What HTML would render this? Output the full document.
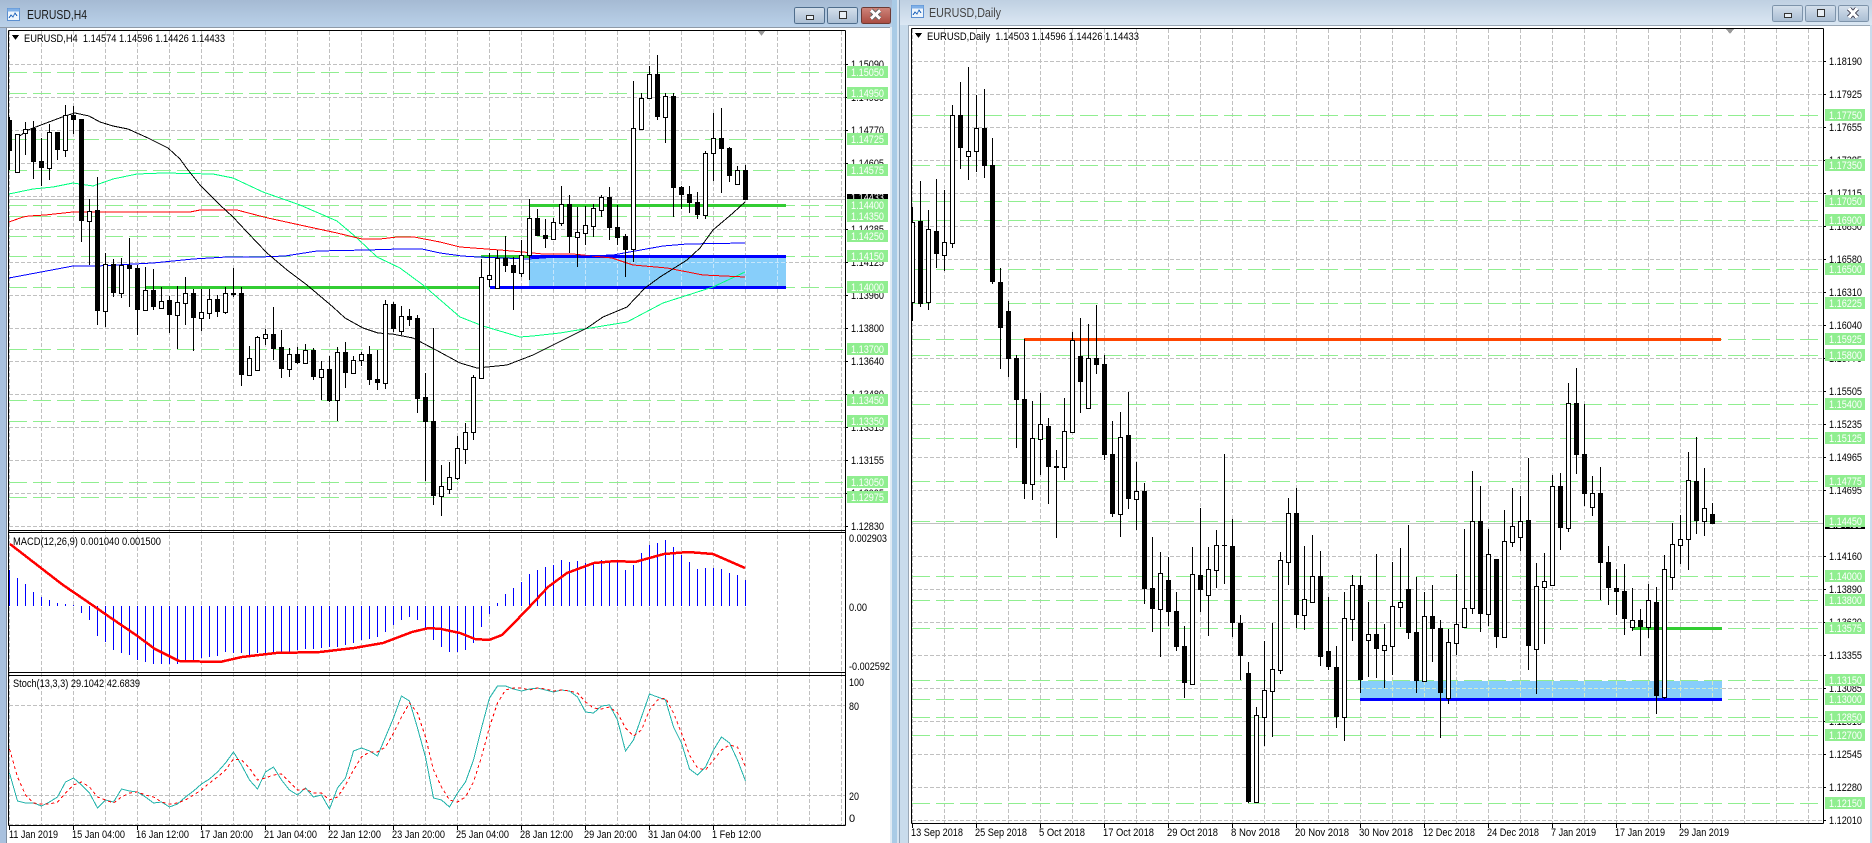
<!DOCTYPE html>
<html><head><meta charset="utf-8"><title>EURUSD</title>
<style>
html,body{margin:0;padding:0;background:#fff;width:1872px;height:843px;overflow:hidden}
svg{display:block;font-family:"Liberation Sans",sans-serif}
text{font-size:11px;fill:#000}
.g{fill:#fff}
.tt{font-size:13px;fill:#1a1a1a}
</style></head><body>
<svg width="1872" height="843" viewBox="0 0 1872 843" xmlns="http://www.w3.org/2000/svg" shape-rendering="crispEdges">
<defs>
<linearGradient id="tl" x1="0" y1="0" x2="0" y2="1"><stop offset="0" stop-color="#a5bad3"/><stop offset="1" stop-color="#bad1e9"/></linearGradient>
<linearGradient id="tr" x1="0" y1="0" x2="0" y2="1"><stop offset="0" stop-color="#bfd0e2"/><stop offset="1" stop-color="#dbe7f3"/></linearGradient>
<linearGradient id="bt" x1="0" y1="0" x2="0" y2="1"><stop offset="0" stop-color="#d5e0ec"/><stop offset="1" stop-color="#a9bdd3"/></linearGradient>
<linearGradient id="rd" x1="0" y1="0" x2="0" y2="1"><stop offset="0" stop-color="#cf857b"/><stop offset="1" stop-color="#a94a40"/></linearGradient>
<clipPath id="cl"><rect x="9" y="31" width="836" height="794"/></clipPath>
<clipPath id="cr"><rect x="912" y="29" width="911" height="794"/></clipPath>
</defs>
<rect width="1872" height="843" fill="#fff"/>
<!-- window chrome -->
<rect x="0" y="0" width="897" height="27" fill="url(#tl)"/>
<rect x="0" y="27" width="6" height="816" fill="#a9c1de"/>
<rect x="6" y="27" width="1" height="816" fill="#7f8ea0"/>
<rect x="0" y="27" width="890" height="1" fill="#8e9aa8"/>
<rect x="890" y="27" width="2" height="816" fill="#dfeaf4"/>
<rect x="892" y="0" width="5" height="843" fill="#a9cbe6"/>
<rect x="897" y="0" width="2" height="843" fill="#d5e4f2"/>
<rect x="899" y="0" width="1" height="843" fill="#8ea4ba"/>
<rect x="900" y="0" width="972" height="25" fill="url(#tr)"/>
<rect x="900" y="25" width="8" height="818" fill="#c9dcec"/>
<rect x="908" y="25" width="1" height="818" fill="#9aa8b6"/>
<rect x="908" y="25" width="964" height="1" fill="#9aa8b6"/>
<rect x="1870" y="25" width="2" height="818" fill="#c9dcec"/>
<!-- title icons -->
<rect x="7.5" y="8.5" width="12" height="12" fill="#eef5fc" stroke="#5b8fd0"/><rect x="7.5" y="8.5" width="12" height="3" fill="#7fb0e8"/><path d="M9 18l2-3 2 2 2-4 2 3" fill="none" stroke="#2f6fc0"/>
<rect x="911.5" y="5.5" width="12" height="12" fill="#eef5fc" stroke="#5b8fd0"/><rect x="911.5" y="5.5" width="12" height="3" fill="#7fb0e8"/><path d="M913 15l2-3 2 2 2-4 2 3" fill="none" stroke="#2f6fc0"/>
<text class="tt" x="27" y="19" textLength="60" lengthAdjust="spacingAndGlyphs">EURUSD,H4</text>
<text class="tt" x="929" y="17" textLength="72" lengthAdjust="spacingAndGlyphs" style="fill:#444">EURUSD,Daily</text>
<!-- buttons -->
<rect x="794.5" y="7.5" width="30" height="16" rx="2" fill="url(#bt)" stroke="#4f6d8c"/><rect x="806.5" y="15.5" width="7" height="4" fill="#e9eff5" stroke="#333"/>
<rect x="827.5" y="7.5" width="30" height="16" rx="2" fill="url(#bt)" stroke="#4f6d8c"/><rect x="839.5" y="11.5" width="7" height="7" fill="#e9eff5" stroke="#333"/>
<rect x="861.5" y="7.5" width="29" height="16" rx="2" fill="url(#rd)" stroke="#6d3a34"/><path d="M871 10.5l9 8M880 10.5l-9 8" stroke="#6b6b6b" stroke-width="5" fill="none"/><path d="M871 10.5l9 8M880 10.5l-9 8" stroke="#fff" stroke-width="3" fill="none"/>
<rect x="1772.5" y="5.5" width="30" height="16" rx="2" fill="url(#bt)" stroke="#7d93aa"/><rect x="1784.5" y="13.5" width="7" height="4" fill="#e9eff5" stroke="#333"/>
<rect x="1805.5" y="5.5" width="30" height="16" rx="2" fill="url(#bt)" stroke="#7d93aa"/><rect x="1817.5" y="9.5" width="7" height="7" fill="#e9eff5" stroke="#333"/>
<rect x="1838.5" y="5.5" width="30" height="16" rx="2" fill="url(#bt)" stroke="#7d93aa"/><path d="M1849 8.5l8 9M1857 8.5l-8 9" stroke="#556" stroke-width="5" fill="none"/><path d="M1849 8.5l8 9M1857 8.5l-8 9" stroke="#fff" stroke-width="3" fill="none"/>

<!-- LEFT CHART -->
<g fill="none">
<path stroke="#c0c0c0" stroke-dasharray="4 2" d="M9 64.5H845M9 97.5H845M9 130.5H845M9 163.5H845M9 196.5H845M9 229.5H845M9 262.5H845M9 295.5H845M9 328.5H845M9 361.5H845M9 394.5H845M9 427.5H845M9 460.5H845M9 493.5H845M9 526.5H845M9 705.5H845M9 795.5H845M9 824.5H845"/>
<path stroke="#c0c0c0" stroke-dasharray="4 2" d="M9.5 31V825M41.5 31V825M73.5 31V825M105.5 31V825M137.5 31V825M169.5 31V825M201.5 31V825M233.5 31V825M265.5 31V825M297.5 31V825M329.5 31V825M361.5 31V825M393.5 31V825M425.5 31V825M457.5 31V825M489.5 31V825M521.5 31V825M553.5 31V825M585.5 31V825M617.5 31V825M649.5 31V825M681.5 31V825M713.5 31V825M745.5 31V825M777.5 31V825M809.5 31V825M841.5 31V825"/>
<path stroke="#90ee90" stroke-dasharray="18 6" d="M9 72.5H845M9 93.5H845M9 139.5H845M9 170.5H845M9 205.5H845M9 216.5H845M9 236.5H845M9 256.5H845M9 287.5H845M9 349.5H845M9 400.5H845M9 421.5H845M9 482.5H845M9 497.5H845"/>
</g>
<rect x="529" y="256" width="257" height="31" fill="#87cefa"/>
<path fill="none" stroke="#c4e6fc" stroke-dasharray="4 2" d="M553.5 258V286M585.5 258V286M617.5 258V286M649.5 258V286M681.5 258V286M713.5 258V286M745.5 258V286M777.5 258V286M529 262.5H786"/>
<path fill="none" stroke="#32cd32" stroke-width="3" d="M145 287.5H481M529 205.5H786M481 256.5H529"/>
<path fill="none" stroke="#0000ff" stroke-width="3" d="M490 287.5H786M529 256.5H786"/>
<path stroke="#c0c0c0" d="M9 199.5H845"/>
<g fill="none" clip-path="url(#cl)">
<polyline stroke="#00ff7f" points="9,194 33,189 53,187 73,183 93,186 113,179 137,174 163,173 213,174 233,178 263,192 300,205 337,221 357,238 377,257 400,268 423,285 460,317 483,326 520,337 533,336 560,333 627,322 663,303 713,287 745,272"/>
<polyline stroke="#ff0000" points="9,222 23,217 29,216 45,215 73,212 117,212 158,212 190,212 200,210 237,210 260,216 268,218 300,225 337,233 362,239 380,239 397,237 414,237 440,242 460,247 500,250 523,252 543,254 573,254 612,258 633,265 667,268 703,275 745,277"/>
<polyline stroke="#0000ff" points="9,278 73,266 97,266 153,263 193,259 227,257 260,257 285,256 317,251 367,250 400,249 422,249 440,253 462,256 478,257 528,259 557,257 613,255 663,246 687,244 745,243"/>
<polyline stroke="#000" points="17,138 28,130 41,125 65,116 75,113 89,116 100,122 113,126 128,129 148,138 168,148 180,159 188,170 200,185 220,205 233,217 247,232 267,253 287,270 307,285 333,307 345,318 363,328 378,333 392,334 413,338 436,350 460,363 477,368 507,365 533,355 563,340 587,328 603,317 627,307 645,288 660,277 687,260 700,248 713,230 733,213 745,202"/>
<path stroke="#000" d="M9.5 117V170M17.5 134V172M25.5 122V155M33.5 121V179M41.5 138V186M49.5 124V180M57.5 132V160M65.5 105V157M73.5 106V134M81.5 119V242M89.5 199V265M97.5 177V325M105.5 253V327M113.5 259V297M121.5 258V298M129.5 238V307M137.5 265V335M145.5 267V310M153.5 269V310M161.5 287V309M169.5 296V333M177.5 286V349M185.5 277V325M193.5 289V351M201.5 289V331M209.5 289V319M217.5 295V317M225.5 287V314M233.5 268V297M241.5 287V386M249.5 346V376M257.5 336V370M265.5 329V345M273.5 307V360M281.5 330V378M289.5 348V377M297.5 347V364M305.5 344V363M313.5 348V380M321.5 361V400M329.5 356V402M337.5 347V421M345.5 342V388M353.5 356V373M361.5 352V366M369.5 346V385M377.5 350V390M385.5 300V389M393.5 302V332M401.5 306V335M409.5 309V326M417.5 315V413M425.5 373V481M433.5 328V505M441.5 465V516M449.5 462V494M457.5 436V480M465.5 423V464M473.5 375V440M481.5 259V378M489.5 253V287M497.5 250V288M505.5 236V272M513.5 257V310M521.5 240V277M529.5 199V280M537.5 209V236M545.5 219V248M553.5 218V239M561.5 186V226M569.5 195V253M577.5 207V267M585.5 206V245M593.5 204V237M601.5 195V217M609.5 187V240M617.5 205V245M625.5 234V277M633.5 81V262M641.5 93V130M649.5 66V98M657.5 55V120M665.5 93V143M673.5 93V217M681.5 186V209M689.5 186V213M697.5 192V219M705.5 151V219M713.5 113V181M721.5 108V193M729.5 147V182M737.5 166V184M745.5 165V200"/>
<path fill="#000" stroke="none" d="M7 120h5v31h-5zM31 128h5v34h-5zM39 161h5v7h-5zM55 132h5v18h-5zM71 115h5v5h-5zM79 119h5v102h-5zM95 210h5v101h-5zM111 264h5v29h-5zM127 265h5v4h-5zM135 268h5v42h-5zM151 290h5v17h-5zM167 300h5v15h-5zM191 293h5v25h-5zM215 299h5v13h-5zM231 293h5v2h-5zM239 293h5v82h-5zM271 334h5v15h-5zM279 347h5v22h-5zM295 354h5v9h-5zM311 350h5v27h-5zM327 369h5v32h-5zM343 352h5v21h-5zM367 354h5v26h-5zM375 379h5v4h-5zM391 304h5v25h-5zM407 316h5v4h-5zM415 318h5v81h-5zM423 397h5v25h-5zM431 421h5v75h-5zM503 258h5v8h-5zM511 265h5v8h-5zM535 218h5v18h-5zM543 235h5v4h-5zM567 204h5v33h-5zM607 197h5v31h-5zM615 227h5v11h-5zM623 236h5v14h-5zM655 74h5v43h-5zM671 96h5v92h-5zM679 187h5v8h-5zM687 194h5v9h-5zM695 202h5v13h-5zM719 138h5v11h-5zM727 148h5v28h-5zM743 170h5v30h-5z"/>
<path fill="#fff" stroke="#000" transform="translate(0,.5)" d="M15.5 134h4v38h-4zM23.5 129h4v4h-4zM47.5 132h4v36h-4zM63.5 115h4v35h-4zM87.5 211h4v10h-4zM103.5 264h4v47h-4zM119.5 265h4v28h-4zM143.5 290h4v20h-4zM159.5 301h4v7h-4zM175.5 302h4v13h-4zM183.5 293h4v10h-4zM199.5 312h4v6h-4zM207.5 299h4v14h-4zM223.5 293h4v19h-4zM247.5 358h4v17h-4zM255.5 337h4v33h-4zM263.5 334h4v4h-4zM287.5 354h4v15h-4zM303.5 350h4v13h-4zM319.5 369h4v8h-4zM335.5 352h4v48h-4zM351.5 360h4v13h-4zM359.5 354h4v6h-4zM383.5 304h4v79h-4zM399.5 316h4v15h-4zM439.5 486h4v10h-4zM447.5 477h4v12h-4zM455.5 448h4v30h-4zM463.5 432h4v17h-4zM471.5 377h4v55h-4zM479.5 277h4v101h-4zM487.5 275h4v4h-4zM495.5 258h4v30h-4zM519.5 255h4v18h-4zM527.5 218h4v37h-4zM551.5 222h4v17h-4zM559.5 204h4v19h-4zM575.5 232h4v5h-4zM583.5 225h4v8h-4zM591.5 208h4v18h-4zM599.5 197h4v13h-4zM631.5 128h4v121h-4zM639.5 98h4v31h-4zM647.5 74h4v24h-4zM663.5 96h4v21h-4zM703.5 153h4v62h-4zM711.5 138h4v15h-4zM735.5 170h4v14h-4z"/>
<!-- MACD -->
<path stroke="#0000ff" d="M9.5 606V570M17.5 606V578M25.5 606V584M33.5 606V592M41.5 606V597M49.5 606V600M57.5 606V603M65.5 606V604M73.5 606V605M81.5 606V613M89.5 606V620M97.5 606V636M105.5 606V642M113.5 606V650M121.5 606V653M129.5 606V655M137.5 606V660M145.5 606V662M153.5 606V664M161.5 606V664M169.5 606V664M177.5 606V664M185.5 606V662M193.5 606V660M201.5 606V658M209.5 606V657M217.5 606V656M225.5 606V652M233.5 606V653M241.5 606V653M249.5 606V655M257.5 606V653M265.5 606V653M273.5 606V652M281.5 606V652M289.5 606V652M297.5 606V650M305.5 606V649M313.5 606V649M321.5 606V648M329.5 606V647M337.5 606V647M345.5 606V645M353.5 606V643M361.5 606V640M369.5 606V639M377.5 606V637M385.5 606V632M393.5 606V625M401.5 606V620M409.5 606V617M417.5 606V620M425.5 606V628M433.5 606V640M441.5 606V647M449.5 606V652M457.5 606V652M465.5 606V650M473.5 606V643M481.5 606V627M489.5 606V614M497.5 606V603M505.5 606V594M513.5 606V588M521.5 606V582M529.5 606V574M537.5 606V570M545.5 606V567M553.5 606V565M561.5 606V560M569.5 606V562M577.5 606V561M585.5 606V563M593.5 606V563M601.5 606V560M609.5 606V562M617.5 606V562M625.5 606V570M633.5 606V565M641.5 606V553M649.5 606V545M657.5 606V543M665.5 606V540M673.5 606V547M681.5 606V555M689.5 606V562M697.5 606V569M705.5 606V568M713.5 606V568M721.5 606V569M729.5 606V573M737.5 606V575M745.5 606V580"/>
<polyline stroke="#ff0000" stroke-width="2.5" stroke-linejoin="round" points="10,544 41,568 63,585 85,600 111,618 136,635 155,649 179,661 220,662 242,657 276,653 320,652 354,648 383,643 412,632 429,628 441,629 460,633 475,639 489,640 502,635 514,623 536,600 548,587 567,573 594,563 616,561 635,562 664,554 688,552 713,554 745,568"/>
<!-- Stoch -->
<polyline stroke="#20b2aa" points="9.5,773 17.5,801 25.5,803 33.5,803 41.5,806 49.5,802 57.5,797 65.5,782 73.5,778 81.5,785 89.5,793 97.5,808 105.5,800 113.5,802 121.5,789 129.5,791 137.5,792 145.5,797 153.5,803 161.5,802 169.5,807 177.5,804 185.5,797 193.5,791 201.5,784 209.5,779 217.5,772 225.5,763 233.5,752 241.5,765 249.5,780 257.5,789 265.5,772 273.5,767 281.5,780 289.5,790 297.5,795 305.5,788 313.5,797 321.5,795 329.5,809 337.5,788 345.5,778 353.5,751 361.5,748 369.5,751 377.5,756 385.5,737 393.5,718 401.5,696 409.5,701 417.5,728 425.5,757 433.5,798 441.5,800 449.5,807 457.5,793 465.5,782 473.5,760 481.5,728 489.5,698 497.5,686 505.5,686 513.5,689 521.5,691 529.5,689 537.5,688 545.5,690 553.5,692 561.5,690 569.5,691 577.5,697 585.5,712 593.5,713 601.5,706 609.5,705 617.5,720 625.5,751 633.5,740 641.5,717 649.5,694 657.5,697 665.5,700 673.5,727 681.5,743 689.5,769 697.5,775 705.5,767 713.5,750 721.5,737 729.5,743 737.5,760 745.5,781"/>
<polyline stroke="#ff0000" stroke-dasharray="3 3" points="9.5,749 17.5,777 25.5,795 33.5,803 41.5,804 49.5,804 57.5,802 65.5,793 73.5,785 81.5,782 89.5,787 97.5,797 105.5,800 113.5,803 121.5,797 129.5,793 137.5,792 145.5,795 153.5,797 161.5,802 169.5,804 177.5,803 185.5,800 193.5,795 201.5,790 209.5,783 217.5,777 225.5,770 233.5,759 241.5,760 249.5,768 257.5,780 265.5,778 273.5,775 281.5,774 289.5,782 297.5,790 305.5,789 313.5,793 321.5,793 329.5,800 337.5,797 345.5,785 353.5,770 361.5,757 369.5,752 377.5,752 385.5,747 393.5,733 401.5,717 409.5,703 417.5,713 425.5,737 433.5,770 441.5,787 449.5,800 457.5,802 465.5,797 473.5,782 481.5,757 489.5,727 497.5,703 505.5,690 513.5,688 521.5,688 529.5,690 537.5,688 545.5,689 553.5,691 561.5,690 569.5,691 577.5,693 585.5,702 593.5,708 601.5,709 609.5,707 617.5,713 625.5,728 633.5,736 641.5,730 649.5,710 657.5,700 665.5,698 673.5,713 681.5,733 689.5,755 697.5,768 705.5,770 713.5,760 721.5,750 729.5,745 737.5,747 745.5,767"/>
</g>
<!-- left frame & dividers -->
<g fill="none" stroke="#000">
<path d="M8.5 30.5H845.5M8.5 30.5V825.5M845.5 30.5V825.5M8.5 825.5H845.5M8.5 530.5H845.5M8.5 532.5H845.5M8.5 672.5H845.5M8.5 675.5H845.5"/>
<path d="M845 64.5h3M845 97.5h3M845 130.5h3M845 163.5h3M845 229.5h3M845 262.5h3M845 295.5h3M845 328.5h3M845 361.5h3M845 394.5h3M845 427.5h3M845 460.5h3M845 493.5h3M845 526.5h3M9.5 825v5M73.5 825v5M137.5 825v5M201.5 825v5M265.5 825v5M329.5 825v5M393.5 825v5M457.5 825v5M521.5 825v5M585.5 825v5M649.5 825v5M713.5 825v5"/>
</g>
<path d="M758 31h7l-3.500 5z" fill="#9a9a9a"/>
<path d="M12 35h7l-3.500 5z" fill="#000"/>
<text x="24" y="42" textLength="201" lengthAdjust="spacingAndGlyphs">EURUSD,H4&#160;&#160;1.14574 1.14596 1.14426 1.14433</text>
<text x="13" y="545" textLength="148" lengthAdjust="spacingAndGlyphs">MACD(12,26,9) 0.001040 0.001500</text>
<text x="13" y="687" textLength="127" lengthAdjust="spacingAndGlyphs">Stoch(13,3,3) 29.1042 42.6839</text>
<g>
<text x="851" y="68" textLength="33" lengthAdjust="spacingAndGlyphs">1.15090</text>
<text x="851" y="101" textLength="33" lengthAdjust="spacingAndGlyphs">1.14930</text>
<text x="851" y="134" textLength="33" lengthAdjust="spacingAndGlyphs">1.14770</text>
<text x="851" y="167" textLength="33" lengthAdjust="spacingAndGlyphs">1.14605</text>
<text x="851" y="233" textLength="33" lengthAdjust="spacingAndGlyphs">1.14285</text>
<text x="851" y="266" textLength="33" lengthAdjust="spacingAndGlyphs">1.14125</text>
<text x="851" y="299" textLength="33" lengthAdjust="spacingAndGlyphs">1.13960</text>
<text x="851" y="332" textLength="33" lengthAdjust="spacingAndGlyphs">1.13800</text>
<text x="851" y="365" textLength="33" lengthAdjust="spacingAndGlyphs">1.13640</text>
<text x="851" y="398" textLength="33" lengthAdjust="spacingAndGlyphs">1.13480</text>
<text x="851" y="431" textLength="33" lengthAdjust="spacingAndGlyphs">1.13315</text>
<text x="851" y="464" textLength="33" lengthAdjust="spacingAndGlyphs">1.13155</text>
<text x="851" y="497" textLength="33" lengthAdjust="spacingAndGlyphs">1.12995</text>
<text x="851" y="530" textLength="33" lengthAdjust="spacingAndGlyphs">1.12830</text>
<text x="849" y="542" textLength="38" lengthAdjust="spacingAndGlyphs">0.002903</text>
<text x="849" y="611" textLength="18" lengthAdjust="spacingAndGlyphs">0.00</text>
<text x="849" y="670" textLength="41" lengthAdjust="spacingAndGlyphs">-0.002592</text>
<text x="849" y="686" textLength="15" lengthAdjust="spacingAndGlyphs">100</text>
<text x="849" y="710" textLength="10" lengthAdjust="spacingAndGlyphs">80</text>
<text x="849" y="800" textLength="10" lengthAdjust="spacingAndGlyphs">20</text>
<text x="849" y="822">0</text>
<rect x="847" y="194" width="41" height="8" fill="#000"/>
<text class="g" x="851" y="201" textLength="33" lengthAdjust="spacingAndGlyphs">1.14433</text>
<path fill="#90ee90" d="M847 66h41v12h-41zM847 87h41v12h-41zM847 133h41v12h-41zM847 164h41v12h-41zM847 199h41v12h-41zM847 210h41v12h-41zM847 230h41v12h-41zM847 250h41v12h-41zM847 281h41v12h-41zM847 343h41v12h-41zM847 394h41v12h-41zM847 415h41v12h-41zM847 476h41v12h-41zM847 491h41v12h-41z"/>
<text class="g" x="851" y="76" textLength="33" lengthAdjust="spacingAndGlyphs">1.15050</text>
<text class="g" x="851" y="97" textLength="33" lengthAdjust="spacingAndGlyphs">1.14950</text>
<text class="g" x="851" y="143" textLength="33" lengthAdjust="spacingAndGlyphs">1.14725</text>
<text class="g" x="851" y="174" textLength="33" lengthAdjust="spacingAndGlyphs">1.14575</text>
<text class="g" x="851" y="209" textLength="33" lengthAdjust="spacingAndGlyphs">1.14400</text>
<text class="g" x="851" y="220" textLength="33" lengthAdjust="spacingAndGlyphs">1.14350</text>
<text class="g" x="851" y="240" textLength="33" lengthAdjust="spacingAndGlyphs">1.14250</text>
<text class="g" x="851" y="260" textLength="33" lengthAdjust="spacingAndGlyphs">1.14150</text>
<text class="g" x="851" y="291" textLength="33" lengthAdjust="spacingAndGlyphs">1.14000</text>
<text class="g" x="851" y="353" textLength="33" lengthAdjust="spacingAndGlyphs">1.13700</text>
<text class="g" x="851" y="404" textLength="33" lengthAdjust="spacingAndGlyphs">1.13450</text>
<text class="g" x="851" y="425" textLength="33" lengthAdjust="spacingAndGlyphs">1.13350</text>
<text class="g" x="851" y="486" textLength="33" lengthAdjust="spacingAndGlyphs">1.13050</text>
<text class="g" x="851" y="501" textLength="33" lengthAdjust="spacingAndGlyphs">1.12975</text>
<text x="9" y="838" textLength="49" lengthAdjust="spacingAndGlyphs">11 Jan 2019</text>
<text x="72" y="838" textLength="53" lengthAdjust="spacingAndGlyphs">15 Jan 04:00</text>
<text x="136" y="838" textLength="53" lengthAdjust="spacingAndGlyphs">16 Jan 12:00</text>
<text x="200" y="838" textLength="53" lengthAdjust="spacingAndGlyphs">17 Jan 20:00</text>
<text x="264" y="838" textLength="53" lengthAdjust="spacingAndGlyphs">21 Jan 04:00</text>
<text x="328" y="838" textLength="53" lengthAdjust="spacingAndGlyphs">22 Jan 12:00</text>
<text x="392" y="838" textLength="53" lengthAdjust="spacingAndGlyphs">23 Jan 20:00</text>
<text x="456" y="838" textLength="53" lengthAdjust="spacingAndGlyphs">25 Jan 04:00</text>
<text x="520" y="838" textLength="53" lengthAdjust="spacingAndGlyphs">28 Jan 12:00</text>
<text x="584" y="838" textLength="53" lengthAdjust="spacingAndGlyphs">29 Jan 20:00</text>
<text x="648" y="838" textLength="53" lengthAdjust="spacingAndGlyphs">31 Jan 04:00</text>
<text x="712" y="838" textLength="49" lengthAdjust="spacingAndGlyphs">1 Feb 12:00</text>
</g>

<!-- RIGHT CHART -->
<g fill="none">
<path stroke="#c0c0c0" stroke-dasharray="4 2" d="M912 61.500H1823M912 94.500H1823M912 127.500H1823M912 160.500H1823M912 193.500H1823M912 226.500H1823M912 259.500H1823M912 292.500H1823M912 325.500H1823M912 358.500H1823M912 391.500H1823M912 424.500H1823M912 457.500H1823M912 490.500H1823M912 556.500H1823M912 589.500H1823M912 622.500H1823M912 655.500H1823M912 688.500H1823M912 721.500H1823M912 754.500H1823M912 787.500H1823M912 820.500H1823"/>
<path stroke="#c0c0c0" stroke-dasharray="4 2" d="M912.5 29V823M944.5 29V823M976.5 29V823M1008.5 29V823M1040.5 29V823M1072.5 29V823M1104.5 29V823M1136.5 29V823M1168.5 29V823M1200.5 29V823M1232.5 29V823M1264.5 29V823M1296.5 29V823M1328.5 29V823M1360.5 29V823M1392.5 29V823M1424.5 29V823M1456.5 29V823M1488.5 29V823M1520.5 29V823M1552.5 29V823M1584.5 29V823M1616.5 29V823M1648.5 29V823M1680.5 29V823M1712.5 29V823M1744.5 29V823M1776.5 29V823M1808.5 29V823"/>
<path stroke="#90ee90" stroke-dasharray="18 6" d="M912 115.500H1823M912 165.500H1823M912 201.500H1823M912 220.500H1823M912 269.500H1823M912 303.500H1823M912 339.500H1823M912 355.500H1823M912 404.500H1823M912 438.500H1823M912 481.500H1823M912 521.500H1823M912 576.500H1823M912 600.500H1823M912 628.500H1823M912 680.500H1823M912 699.500H1823M912 717.500H1823M912 735.500H1823M912 803.500H1823"/>
</g>
<rect x="1360" y="681" width="362" height="18" fill="#87cefa"/>
<path fill="none" stroke="#d2eac8" stroke-dasharray="4 2" d="M1392.5 681V698M1424.5 681V698M1456.5 681V698M1488.5 681V698M1520.5 681V698M1552.5 681V698M1584.5 681V698M1616.5 681V698M1648.5 681V698M1680.5 681V698M1712.5 681V698M1360 688.500H1722"/>
<path fill="none" stroke="#ff4500" stroke-width="3" d="M1024 339.500H1721"/>
<path fill="none" stroke="#32cd32" stroke-width="3" d="M1632 628.500H1722"/>
<path fill="none" stroke="#0000ff" stroke-width="3" d="M1360 699.500H1722"/>
<path stroke="#c0c0c0" d="M912 523.500H1823"/>
<g fill="none" clip-path="url(#cr)">
<path stroke="#000" d="M912.5 207V321M920.5 181V307M928.5 210V310M936.5 179V268M944.5 190V271M952.5 105V248M960.5 82V169M968.5 67V180M976.5 95V172M984.5 89V178M992.5 138V284M1000.5 268V369M1008.5 301V377M1016.5 355V448M1024.5 339V499M1032.5 401V500M1040.5 393V475M1048.5 418V504M1056.5 450V538M1064.5 398V480M1072.5 332V432M1080.5 318V413M1088.5 324V409M1096.5 305V374M1104.5 355V460M1112.5 421V517M1120.5 412V537M1128.5 392V509M1136.5 462V530M1144.5 483V604M1152.5 537V632M1160.5 552V657M1168.5 557V626M1176.5 592V651M1184.5 626V698M1192.5 547V685M1200.5 508V612M1208.5 547V636M1216.5 530V588M1224.5 454V584M1232.5 519V637M1240.5 615V680M1248.5 662V803M1256.5 707V803M1264.5 641V746M1272.5 623V737M1280.5 552V674M1288.5 498V585M1296.5 488V628M1304.5 546V630M1312.5 535V603M1320.5 551V666M1328.5 597V670M1336.5 646V728M1344.5 592V741M1352.5 575V641M1360.5 576V693M1368.5 602V677M1376.5 554V678M1384.5 624V688M1392.5 562V675M1400.5 548V627M1408.5 525V639M1416.5 577V693M1424.5 592V681M1432.5 585V662M1440.5 620V738M1448.5 629V704M1456.5 574V655M1464.5 529V628M1472.5 471V614M1480.5 486V632M1488.5 529V626M1496.5 559V648M1504.5 510V638M1512.5 488V547M1520.5 496V551M1528.5 458V670M1536.5 563V694M1544.5 553V644M1552.5 475V585M1560.5 473V550M1568.5 383V532M1576.5 368V474M1584.5 404V506M1592.5 476V516M1600.5 467V600M1608.5 546V605M1616.5 569V615M1624.5 564V635M1632.5 588V631M1640.5 609V656M1648.5 584V638M1656.5 587V714M1664.5 555V699M1672.5 523V590M1680.5 515V564M1688.5 452V570M1696.5 437V534M1704.5 468V536M1712.5 503V524"/>
<path fill="#000" stroke="none" d="M918 221h5v83h-5zM934 231h5v23h-5zM958 115h5v33h-5zM982 128h5v38h-5zM990 165h5v117h-5zM998 282h5v46h-5zM1006 311h5v48h-5zM1014 358h5v42h-5zM1022 399h5v85h-5zM1046 426h5v41h-5zM1054 466h5v2h-5zM1078 356h5v26h-5zM1094 358h5v7h-5zM1102 364h5v91h-5zM1110 454h5v60h-5zM1126 435h5v64h-5zM1142 491h5v98h-5zM1150 588h5v21h-5zM1166 580h5v32h-5zM1174 611h5v36h-5zM1182 646h5v37h-5zM1198 575h5v15h-5zM1222 545h5v1h-5zM1230 546h5v77h-5zM1238 623h5v33h-5zM1246 673h5v129h-5zM1294 513h5v102h-5zM1318 576h5v81h-5zM1326 651h5v16h-5zM1334 667h5v50h-5zM1358 585h5v95h-5zM1374 634h5v15h-5zM1406 589h5v44h-5zM1414 632h5v49h-5zM1430 616h5v13h-5zM1438 628h5v65h-5zM1478 521h5v93h-5zM1494 559h5v78h-5zM1526 520h5v126h-5zM1558 486h5v42h-5zM1574 403h5v52h-5zM1582 454h5v40h-5zM1598 493h5v70h-5zM1606 562h5v26h-5zM1614 588h5v4h-5zM1622 591h5v28h-5zM1638 620h5v7h-5zM1654 602h5v94h-5zM1694 481h5v40h-5zM1710 514h5v10h-5z"/>
<path fill="#fff" stroke="#000" transform="translate(0,.5)" d="M910.5 222h4v80h-4zM926.500 229h4v73h-4zM942.500 242h4v13h-4zM950.500 115h4v128h-4zM966.500 151h4v5h-4zM974.500 128h4v23h-4zM1030.500 438h4v46h-4zM1038.500 424h4v15h-4zM1062.500 431h4v36h-4zM1070.500 340h4v92h-4zM1086.500 358h4v50h-4zM1118.500 437h4v77h-4zM1134.500 491h4v8h-4zM1158.500 573h4v36h-4zM1190.500 574h4v110h-4zM1206.500 569h4v26h-4zM1214.500 545h4v25h-4zM1254.500 715h4v87h-4zM1262.500 690h4v27h-4zM1270.500 669h4v22h-4zM1278.500 560h4v110h-4zM1286.500 513h4v49h-4zM1302.500 599h4v16h-4zM1310.500 576h4v26h-4zM1342.500 618h4v99h-4zM1350.500 585h4v34h-4zM1366.500 634h4v6h-4zM1382.500 645h4v5h-4zM1390.500 606h4v40h-4zM1398.500 602h4v5h-4zM1422.500 616h4v65h-4zM1446.500 642h4v56h-4zM1454.500 624h4v19h-4zM1462.500 608h4v19h-4zM1470.500 521h4v87h-4zM1486.500 554h4v60h-4zM1502.500 541h4v96h-4zM1510.500 526h4v16h-4zM1518.500 521h4v16h-4zM1534.500 586h4v63h-4zM1542.500 581h4v6h-4zM1550.500 486h4v99h-4zM1566.500 403h4v125h-4zM1590.500 493h4v14h-4zM1630.500 620h4v7h-4zM1646.500 600h4v27h-4zM1662.500 569h4v128h-4zM1670.500 544h4v33h-4zM1678.500 539h4v6h-4zM1686.500 480h4v59h-4zM1702.500 508h4v13h-4z"/>
</g>
<g fill="none" stroke="#000">
<path d="M911.500 28.500H1823.500M911.500 28.500V823.500M1823.500 28.500V823.500M911.500 823.500H1823.500"/>
<path d="M1823 61.500h3M1823 94.500h3M1823 127.500h3M1823 160.500h3M1823 193.500h3M1823 226.500h3M1823 259.500h3M1823 292.500h3M1823 325.500h3M1823 358.500h3M1823 391.500h3M1823 424.500h3M1823 457.500h3M1823 490.500h3M1823 556.500h3M1823 589.500h3M1823 622.500h3M1823 655.500h3M1823 688.500h3M1823 721.500h3M1823 754.500h3M1823 787.500h3M1823 820.500h3M912.500 823v5M976.500 823v5M1040.500 823v5M1104.500 823v5M1168.500 823v5M1232.500 823v5M1296.500 823v5M1360.500 823v5M1424.500 823v5M1488.500 823v5M1552.500 823v5M1616.500 823v5M1680.500 823v5"/>
</g>
<path d="M1726 29h8l-4 5z" fill="#9a9a9a"/>
<path d="M915 33h7l-3.500 5z" fill="#000"/>
<text x="927" y="40" textLength="212" lengthAdjust="spacingAndGlyphs">EURUSD,Daily&#160;&#160;1.14503 1.14596 1.14426 1.14433</text>
<g>
<text x="1829" y="65" textLength="33" lengthAdjust="spacingAndGlyphs">1.18190</text>
<text x="1829" y="98" textLength="33" lengthAdjust="spacingAndGlyphs">1.17925</text>
<text x="1829" y="131" textLength="33" lengthAdjust="spacingAndGlyphs">1.17655</text>
<text x="1829" y="164" textLength="33" lengthAdjust="spacingAndGlyphs">1.17385</text>
<text x="1829" y="197" textLength="33" lengthAdjust="spacingAndGlyphs">1.17115</text>
<text x="1829" y="230" textLength="33" lengthAdjust="spacingAndGlyphs">1.16850</text>
<text x="1829" y="263" textLength="33" lengthAdjust="spacingAndGlyphs">1.16580</text>
<text x="1829" y="296" textLength="33" lengthAdjust="spacingAndGlyphs">1.16310</text>
<text x="1829" y="329" textLength="33" lengthAdjust="spacingAndGlyphs">1.16040</text>
<text x="1829" y="362" textLength="33" lengthAdjust="spacingAndGlyphs">1.15770</text>
<text x="1829" y="395" textLength="33" lengthAdjust="spacingAndGlyphs">1.15505</text>
<text x="1829" y="428" textLength="33" lengthAdjust="spacingAndGlyphs">1.15235</text>
<text x="1829" y="461" textLength="33" lengthAdjust="spacingAndGlyphs">1.14965</text>
<text x="1829" y="494" textLength="33" lengthAdjust="spacingAndGlyphs">1.14695</text>
<text x="1829" y="560" textLength="33" lengthAdjust="spacingAndGlyphs">1.14160</text>
<text x="1829" y="593" textLength="33" lengthAdjust="spacingAndGlyphs">1.13890</text>
<text x="1829" y="626" textLength="33" lengthAdjust="spacingAndGlyphs">1.13620</text>
<text x="1829" y="659" textLength="33" lengthAdjust="spacingAndGlyphs">1.13355</text>
<text x="1829" y="692" textLength="33" lengthAdjust="spacingAndGlyphs">1.13085</text>
<text x="1829" y="725" textLength="33" lengthAdjust="spacingAndGlyphs">1.12815</text>
<text x="1829" y="758" textLength="33" lengthAdjust="spacingAndGlyphs">1.12545</text>
<text x="1829" y="791" textLength="33" lengthAdjust="spacingAndGlyphs">1.12280</text>
<text x="1829" y="824" textLength="33" lengthAdjust="spacingAndGlyphs">1.12010</text>
<rect x="1825" y="520" width="40" height="9" fill="#000"/>
<text class="g" x="1829" y="528" textLength="33" lengthAdjust="spacingAndGlyphs">1.14433</text>
<path fill="#90ee90" d="M1825 109h40v12h-40zM1825 159h40v12h-40zM1825 195h40v12h-40zM1825 214h40v12h-40zM1825 263h40v12h-40zM1825 297h40v12h-40zM1825 333h40v12h-40zM1825 349h40v12h-40zM1825 398h40v12h-40zM1825 432h40v12h-40zM1825 475h40v12h-40zM1825 515h40v12h-40zM1825 570h40v12h-40zM1825 594h40v12h-40zM1825 622h40v12h-40zM1825 674h40v12h-40zM1825 693h40v12h-40zM1825 711h40v12h-40zM1825 729h40v12h-40zM1825 797h40v12h-40z"/>
<text class="g" x="1829" y="119" textLength="33" lengthAdjust="spacingAndGlyphs">1.17750</text>
<text class="g" x="1829" y="169" textLength="33" lengthAdjust="spacingAndGlyphs">1.17350</text>
<text class="g" x="1829" y="205" textLength="33" lengthAdjust="spacingAndGlyphs">1.17050</text>
<text class="g" x="1829" y="224" textLength="33" lengthAdjust="spacingAndGlyphs">1.16900</text>
<text class="g" x="1829" y="273" textLength="33" lengthAdjust="spacingAndGlyphs">1.16500</text>
<text class="g" x="1829" y="307" textLength="33" lengthAdjust="spacingAndGlyphs">1.16225</text>
<text class="g" x="1829" y="343" textLength="33" lengthAdjust="spacingAndGlyphs">1.15925</text>
<text class="g" x="1829" y="359" textLength="33" lengthAdjust="spacingAndGlyphs">1.15800</text>
<text class="g" x="1829" y="408" textLength="33" lengthAdjust="spacingAndGlyphs">1.15400</text>
<text class="g" x="1829" y="442" textLength="33" lengthAdjust="spacingAndGlyphs">1.15125</text>
<text class="g" x="1829" y="485" textLength="33" lengthAdjust="spacingAndGlyphs">1.14775</text>
<text class="g" x="1829" y="525" textLength="33" lengthAdjust="spacingAndGlyphs">1.14450</text>
<text class="g" x="1829" y="580" textLength="33" lengthAdjust="spacingAndGlyphs">1.14000</text>
<text class="g" x="1829" y="604" textLength="33" lengthAdjust="spacingAndGlyphs">1.13800</text>
<text class="g" x="1829" y="632" textLength="33" lengthAdjust="spacingAndGlyphs">1.13575</text>
<text class="g" x="1829" y="684" textLength="33" lengthAdjust="spacingAndGlyphs">1.13150</text>
<text class="g" x="1829" y="703" textLength="33" lengthAdjust="spacingAndGlyphs">1.13000</text>
<text class="g" x="1829" y="721" textLength="33" lengthAdjust="spacingAndGlyphs">1.12850</text>
<text class="g" x="1829" y="739" textLength="33" lengthAdjust="spacingAndGlyphs">1.12700</text>
<text class="g" x="1829" y="807" textLength="33" lengthAdjust="spacingAndGlyphs">1.12150</text>
<text x="911" y="836" textLength="52" lengthAdjust="spacingAndGlyphs">13 Sep 2018</text>
<text x="975" y="836" textLength="52" lengthAdjust="spacingAndGlyphs">25 Sep 2018</text>
<text x="1039" y="836" textLength="46" lengthAdjust="spacingAndGlyphs">5 Oct 2018</text>
<text x="1103" y="836" textLength="51" lengthAdjust="spacingAndGlyphs">17 Oct 2018</text>
<text x="1167" y="836" textLength="51" lengthAdjust="spacingAndGlyphs">29 Oct 2018</text>
<text x="1231" y="836" textLength="49" lengthAdjust="spacingAndGlyphs">8 Nov 2018</text>
<text x="1295" y="836" textLength="54" lengthAdjust="spacingAndGlyphs">20 Nov 2018</text>
<text x="1359" y="836" textLength="54" lengthAdjust="spacingAndGlyphs">30 Nov 2018</text>
<text x="1423" y="836" textLength="52" lengthAdjust="spacingAndGlyphs">12 Dec 2018</text>
<text x="1487" y="836" textLength="52" lengthAdjust="spacingAndGlyphs">24 Dec 2018</text>
<text x="1551" y="836" textLength="45" lengthAdjust="spacingAndGlyphs">7 Jan 2019</text>
<text x="1615" y="836" textLength="50" lengthAdjust="spacingAndGlyphs">17 Jan 2019</text>
<text x="1679" y="836" textLength="50" lengthAdjust="spacingAndGlyphs">29 Jan 2019</text>
</g>
</svg>
</body></html>
